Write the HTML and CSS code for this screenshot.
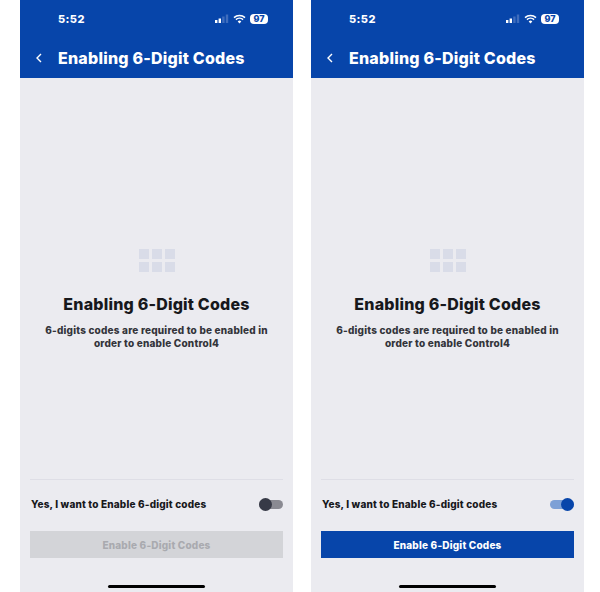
FILE: index.html
```html
<!DOCTYPE html>
<html lang="en">
<head>
    <meta charset="UTF-8">
    <meta name="viewport" content="width=device-width, initial-scale=1.0">
    <title>Enabling 6-Digit Codes</title>
    <link rel="stylesheet" href="styles.css">
</head>
<body>
    <div class="phone">
        <div class="top-bar">
            <div class="status">
                <span class="time">5:52</span>
                <div class="status-icons">
                    <svg class="signal" width="14" height="10" viewBox="0 0 14 10"><rect x="0" y="6" width="2.4" height="3" fill="#fff"/><rect x="3.6" y="4.5" width="2.4" height="4.5" fill="#fff"/><rect x="7.2" y="2.5" width="2.4" height="6.5" fill="#3f6dbd"/><rect x="10.8" y="0.5" width="2.4" height="8.5" fill="#3f6dbd"/></svg>
                    <svg class="wifi" width="13" height="10" viewBox="0 0 13 10"><path d="M1 3.6a8 8 0 0 1 11 0M2.9 5.6a5.2 5.2 0 0 1 7.2 0" fill="none" stroke="#fff" stroke-width="1.5"/><path d="M6.5 9.4 4.7 7.4a2.6 2.6 0 0 1 3.6 0z" fill="#fff"/></svg>
                    <span class="battery">97</span>
                </div>
            </div>
            <div class="nav">
                <svg class="back" width="6" height="10" viewBox="0 0 6 10"><path d="M5 1 1 5l4 4" fill="none" stroke="#fff" stroke-width="1.4"/></svg>
                <span class="nav-title">Enabling 6-Digit Codes</span>
            </div>
        </div>
        <div class="content">
            <div class="keypad">
                <i></i><i></i><i></i><i></i><i></i><i></i>
            </div>
            <h1>Enabling 6-Digit Codes</h1>
            <p>6-digits codes are required to be enabled in<br>order to enable Control4</p>
        </div>
        <div class="footer">
            <div class="confirm-row">
                <span>Yes, I want to Enable 6-digit codes</span>
                <div class="toggle"><b></b></div>
            </div>
            <button disabled>Enable 6-Digit Codes</button>
        </div>
        <div class="home-bar"></div>
    </div>

    <div class="phone">
        <div class="top-bar">
            <div class="status">
                <span class="time">5:52</span>
                <div class="status-icons">
                    <svg class="signal" width="14" height="10" viewBox="0 0 14 10"><rect x="0" y="6" width="2.4" height="3" fill="#fff"/><rect x="3.6" y="4.5" width="2.4" height="4.5" fill="#fff"/><rect x="7.2" y="2.5" width="2.4" height="6.5" fill="#3f6dbd"/><rect x="10.8" y="0.5" width="2.4" height="8.5" fill="#3f6dbd"/></svg>
                    <svg class="wifi" width="13" height="10" viewBox="0 0 13 10"><path d="M1 3.6a8 8 0 0 1 11 0M2.9 5.6a5.2 5.2 0 0 1 7.2 0" fill="none" stroke="#fff" stroke-width="1.5"/><path d="M6.5 9.4 4.7 7.4a2.6 2.6 0 0 1 3.6 0z" fill="#fff"/></svg>
                    <span class="battery">97</span>
                </div>
            </div>
            <div class="nav">
                <svg class="back" width="6" height="10" viewBox="0 0 6 10"><path d="M5 1 1 5l4 4" fill="none" stroke="#fff" stroke-width="1.4"/></svg>
                <span class="nav-title">Enabling 6-Digit Codes</span>
            </div>
        </div>
        <div class="content">
            <div class="keypad">
                <i></i><i></i><i></i><i></i><i></i><i></i>
            </div>
            <h1>Enabling 6-Digit Codes</h1>
            <p>6-digits codes are required to be enabled in<br>order to enable Control4</p>
        </div>
        <div class="footer">
            <div class="confirm-row">
                <span>Yes, I want to Enable 6-digit codes</span>
                <div class="toggle on"><b></b></div>
            </div>
            <button>Enable 6-Digit Codes</button>
        </div>
        <div class="home-bar"></div>
    </div>
</body>
</html>
```

FILE: styles.css
```css
:root {
    --blue: #0745aa;
    --bg: #ebebf0;
    --text: #17181c;
}

body {
    margin: 0;
    padding-left: 20px;
    display: flex;
    gap: 18px;
    background-color: #ffffff;
    font-family: Inter, "Liberation Sans", sans-serif;
    overflow: hidden;
}

.phone {
    width: 273px;
    height: 592px;
    display: flex;
    flex-direction: column;
    background-color: var(--bg);
}

.top-bar {
    height: 78px;
    box-sizing: border-box;
    padding-top: 12px;
    background-color: var(--blue);
    color: #ffffff;
}

.status {
    height: 14px;
    padding: 0 25px 0 38px;
    display: flex;
    align-items: center;
    justify-content: space-between;
}

.time {
    font-size: 11px;
    font-weight: 800;
    letter-spacing: 0.4px;
}

.status-icons {
    display: flex;
    align-items: center;
    gap: 4px;
}

.battery {
    width: 18px;
    height: 10px;
    border-radius: 4px;
    background-color: #ffffff;
    color: var(--blue);
    font-size: 9px;
    font-weight: 800;
    line-height: 10px;
    text-align: center;
}

.nav {
    margin-top: 16px;
    padding-left: 16px;
    display: flex;
    align-items: center;
    gap: 16px;
}

.nav-title {
    font-size: 16px;
    font-weight: 800;
    letter-spacing: 0.22px;
    line-height: 32px;
}

.content {
    height: 401px;
    box-sizing: border-box;
    padding-top: 171px;
    text-align: center;
    color: var(--text);
}

.keypad {
    width: 36px;
    margin: 0 auto;
    display: grid;
    grid-template-columns: repeat(3, 10px);
    grid-auto-rows: 10px;
    gap: 3px;
}

.keypad i {
    background-color: #d9dce8;
}

h1 {
    margin: 22px 0 0;
    font-size: 16px;
    font-weight: 800;
    letter-spacing: 0.2px;
    line-height: 20px;
}

p {
    margin: 10px 0 0;
    font-size: 10px;
    font-weight: 800;
    letter-spacing: 0.2px;
    line-height: 12.5px;
    color: #33343a;
}

.footer {
    margin: 0 10px;
    border-top: 1px solid #dedee6;
}

.confirm-row {
    height: 51px;
    padding-bottom: 3px;
    padding-left: 1px;
    box-sizing: border-box;
    display: flex;
    align-items: center;
    justify-content: space-between;
    font-size: 10px;
    font-weight: 800;
    letter-spacing: 0.18px;
    color: var(--text);
}

.toggle {
    width: 24px;
    height: 9px;
    border-radius: 5px;
    background-color: #8a8a92;
    display: flex;
    align-items: center;
}

.toggle b {
    width: 13px;
    height: 13px;
    border-radius: 50%;
    background-color: #373a47;
}

.toggle.on {
    background-color: #7da0d6;
    justify-content: flex-end;
}

.toggle.on b {
    background-color: var(--blue);
}

button {
    display: block;
    width: 100%;
    height: 27px;
    border: none;
    padding: 0;
    background-color: var(--blue);
    color: #ffffff;
    font-family: inherit;
    font-size: 10px;
    font-weight: 800;
    letter-spacing: 0.2px;
}

button:disabled {
    background-color: #d3d4d8;
    color: #a9aaaf;
}

.home-bar {
    width: 97px;
    height: 3px;
    margin: 27px auto 0;
    border-radius: 2px;
    background-color: #000000;
}
```
